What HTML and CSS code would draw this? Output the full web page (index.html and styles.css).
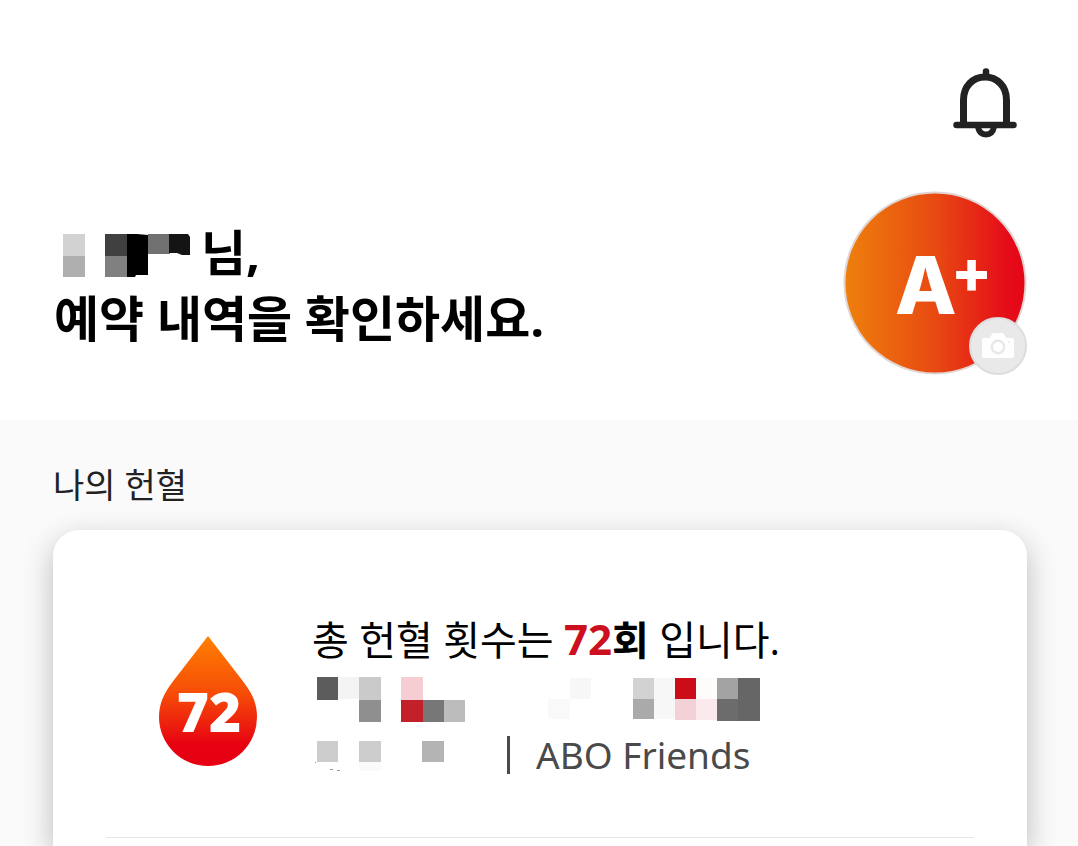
FILE: index.html
```html
<!DOCTYPE html>
<html lang="ko">
<head>
    <meta charset="UTF-8">
    <meta name="viewport" content="width=device-width, initial-scale=1.0">
    <title>나의 헌혈</title>
    <link rel="stylesheet" href="styles.css">
</head>
<body>
    <header class="header">
        <div class="toolbar">
            <button class="bell" type="button" aria-label="알림">
                <svg width="64" height="70" viewBox="0 0 64 70" fill="none" stroke="#222" stroke-width="6.500" stroke-linecap="round">
                    <path d="M33 3.500v5"/>
                    <path d="M10.500 56V32C10.500 18 20 9 32 9S53.500 18 53.500 32V56" stroke-width="7"/>
                    <path d="M3.500 57H60.500"/>
                    <path d="M25 59c1 5 4 7.500 8 7.500s7-2.500 8-7.500" stroke-width="6"/>
                </svg>
            </button>
        </div>
        <div class="profile">
            <h1 class="greeting">
                <span class="name-line">
                    <svg class="name" width="136" height="44" viewBox="0 0 136 44" role="img" aria-label="이름">
                        <rect x="0" y="0" width="22" height="22" fill="#d2d2d2"/>
                        <rect x="0" y="22" width="22" height="21" fill="#afafaf"/>
                        <rect x="42" y="0" width="22" height="22" fill="#404040"/>
                        <rect x="42" y="22" width="22" height="21" fill="#808080"/>
                        <path d="M64 0h10l11 1v40H73l-1 2h-8z" fill="#000"/>
                        <rect x="85" y="0" width="22" height="20" fill="#717171"/>
                        <path d="M106 0h19l2 3v18h-8l-5-2h-8z" fill="#141414"/>
                    </svg>
                    님,
                </span>
                예약 내역을 확인하세요.
            </h1>
            <div class="avatar">
                <svg class="avatar-face" viewBox="0 0 184 184" role="img" aria-label="A+">
                    <defs>
                        <linearGradient id="face" x1="0" x2="1" y1="0" y2="0">
                            <stop offset="0" stop-color="#ee800c"/>
                            <stop offset="0.500" stop-color="#e84a12"/>
                            <stop offset="0.900" stop-color="#e50c19"/>
                            <stop offset="1" stop-color="#e50518"/>
                        </linearGradient>
                    </defs>
                    <circle cx="92" cy="92" r="90.500" fill="url(#face)" stroke="#e0d5d2" stroke-width="2"/>
                    <text class="blood-type" x="52" y="123">A<tspan class="blood-rh" x="108" y="102">+</tspan></text>
                </svg>
                <button class="camera" type="button" aria-label="사진 변경">
                    <svg width="32" height="26" viewBox="0 0 32 26">
                        <path d="M2 5h6l2-4q.500-1 2-1h8q1.500 0 2 1l2 4h6q2 0 2 2v16q0 2-2 2H2q-2 0-2-2V7q0-2 2-2z" fill="#fff"/>
                        <circle cx="16" cy="14" r="6.200" fill="none" stroke="#e8e8e8" stroke-width="2.500"/>
                        <circle cx="27" cy="9" r="1" fill="#e8e8e8"/>
                    </svg>
                </button>
            </div>
        </div>
    </header>

    <main class="content">
        <h2 class="section-title">나의 헌혈</h2>
        <section class="card">
            <div class="summary">
                <svg class="drop" width="100" height="132" viewBox="0 0 100 132" role="img" aria-label="72">
                    <defs>
                        <linearGradient id="blood" x1="0" x2="0" y1="0" y2="1">
                            <stop offset="0" stop-color="#ff8000"/>
                            <stop offset="0.450" stop-color="#f64b08"/>
                            <stop offset="0.850" stop-color="#e60012"/>
                            <stop offset="1" stop-color="#e60012"/>
                        </linearGradient>
                    </defs>
                    <path d="M50 1L84 45C94 58 99 68 99 82A49 49 0 0 1 1 82C1 68 6 58 16 45Z" fill="url(#blood)"/>
                    <text class="drop-count" x="51" y="97">72</text>
                </svg>
                <div class="details">
                    <p class="total">총 헌혈 횟수는 <strong><span class="count">72</span>회</strong> 입니다.</p>
                    <svg class="masked" width="448" height="48" viewBox="0 0 448 48" aria-hidden="true">
                        <rect x="5" y="1" width="21" height="23" fill="#5c5c5c"/>
                        <rect x="26" y="1" width="21" height="22" fill="#f4f4f4"/>
                        <rect x="47" y="1" width="22" height="23" fill="#cacaca"/>
                        <rect x="47" y="24" width="22" height="22" fill="#8f8f8f"/>
                        <rect x="89" y="1" width="22" height="23" fill="#f7cdd4"/>
                        <rect x="89" y="24" width="22" height="22" fill="#c4202a"/>
                        <rect x="111" y="24" width="21" height="22" fill="#777"/>
                        <rect x="132" y="24" width="21" height="22" fill="#bcbcbc"/>
                        <rect x="236" y="23" width="22" height="20" fill="#f9f9f9"/>
                        <rect x="258" y="2" width="21" height="21" fill="#f7f7f7"/>
                        <rect x="321" y="2" width="21" height="21" fill="#d2d2d2"/>
                        <rect x="321" y="23" width="21" height="20" fill="#aaa"/>
                        <rect x="342" y="2" width="21" height="41" fill="#f7f7f7"/>
                        <rect x="363" y="2" width="21" height="21" fill="#cd0c19"/>
                        <rect x="363" y="23" width="21" height="21" fill="#f3d2d7"/>
                        <rect x="384" y="2" width="21" height="21" fill="#fefbfb"/>
                        <rect x="384" y="23" width="21" height="21" fill="#fce9eb"/>
                        <rect x="405" y="2" width="21" height="21" fill="#a3a3a3"/>
                        <rect x="405" y="23" width="21" height="22" fill="#6c6c6c"/>
                        <rect x="426" y="2" width="22" height="43" fill="#666"/>
                    </svg>
                    <div class="club">
                        <svg class="masked" width="132" height="40" viewBox="0 0 132 40" aria-hidden="true">
                            <rect x="5" y="6" width="21" height="21" fill="#ccc"/>
                            <rect x="47" y="6" width="22" height="21" fill="#ccc"/>
                            <rect x="47" y="27" width="22" height="9" fill="#fafafa"/>
                            <rect x="110" y="6" width="22" height="21" fill="#b4b4b4"/>
                            <path d="M3 27.500h1M18 34.500h3M25 35.500h3" stroke="#999"/>
                        </svg>
                        <span class="club-name">ABO Friends</span>
                    </div>
                </div>
            </div>
        </section>
    </main>
</body>
</html>
```

FILE: styles.css
```css
* {
    box-sizing: border-box;
    margin: 0;
    padding: 0;
}

body {
    display: flex;
    flex-direction: column;
    min-height: 100vh;
    background-color: #fff;
    color: #000;
    font-family: "Open Sans", "Noto Sans CJK KR", sans-serif;
}

button {
    border: none;
    background: none;
    cursor: pointer;
}

svg {
    display: block;
    flex-shrink: 0;
}

.header {
    padding: 68px 51px 45px 54px;
}

.toolbar {
    display: flex;
    justify-content: flex-end;
    padding-right: 10px;
}

.bell {
    width: 64px;
    height: 70px;
}

.profile {
    display: flex;
    justify-content: space-between;
    align-items: center;
    margin-top: 53px;
}

.greeting {
    padding-top: 4px;
    font-size: 49px;
    font-weight: 700;
    line-height: 66px;
}

.name-line {
    display: flex;
    align-items: center;
    gap: 2px;
    padding-left: 9px;
}

.name {
    margin-top: 8px;
}

.avatar {
    position: relative;
    width: 184px;
    height: 184px;
}

.avatar-face {
    width: 100%;
    height: 100%;
}

.blood-type {
    fill: #fff;
    font-family: Inter, sans-serif;
    font-size: 80px;
    font-weight: 800;
}

.blood-rh {
    font-size: 60px;
}

.camera {
    position: absolute;
    right: 0;
    bottom: 0;
    display: flex;
    justify-content: center;
    align-items: center;
    width: 58px;
    height: 58px;
    border: 2px solid #ddd;
    border-radius: 50%;
    background-color: #e9e9e9;
}

.content {
    display: flex;
    flex-direction: column;
    flex: 1;
    padding: 40px 51px 0 53px;
    background-color: #fafafa;
}

.section-title {
    margin-bottom: 20px;
    color: #222;
    font-size: 34px;
    font-weight: 400;
    line-height: 50px;
}

.card {
    flex: 1;
    padding: 80px 53px 0;
    border-radius: 26px 26px 0 0;
    background-color: #fff;
    box-shadow: 0 10px 30px rgba(0, 0, 0, 0.25);
}

.summary {
    display: flex;
    align-items: flex-start;
    gap: 54px;
    padding: 0 52px 62px;
    border-bottom: 1px solid #e6e6e6;
}

.drop {
    margin-top: 25px;
}

.drop-count {
    fill: #fff;
    font-size: 55px;
    font-weight: 800;
    text-anchor: middle;
}

.total {
    margin-bottom: 6px;
    font-size: 40px;
    line-height: 60px;
    white-space: nowrap;
}

.total strong {
    font-weight: 700;
}

.total .count {
    color: #cc1020;
    font-size: 42px;
    line-height: 40px;
}

.club {
    display: flex;
    align-items: center;
    gap: 63px;
    margin-top: 11px;
}

.club-name {
    padding-left: 26px;
    border-left: 3px solid #4a4a4a;
    color: #4a4a4a;
    font-family: "Noto Sans", sans-serif;
    font-size: 37px;
    line-height: 38px;
    white-space: nowrap;
}
```
